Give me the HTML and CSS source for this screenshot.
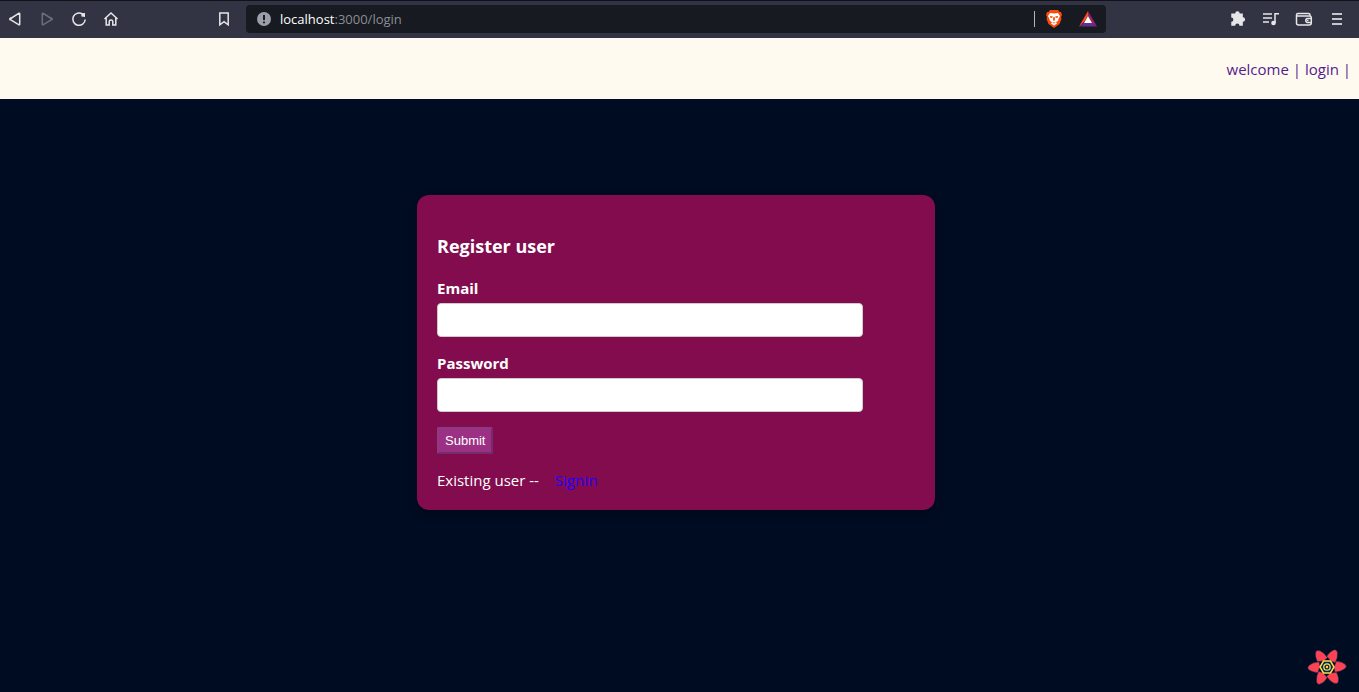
FILE: index.html
```html
<!DOCTYPE html>
<html lang="en">
<head>
<meta charset="utf-8">
<title>Login</title>
<link rel="stylesheet" href="styles.css">
</head>
<body>
<div class="toolbar">
  <div class="nav-tools">
    <button class="tool" aria-label="Back"><svg width="16" height="16" viewBox="0 0 16 16"><path d="M3 8 12 2.200Q12.700 2 12.700 2.800V13.200Q12.700 14 12 13.800L3 8.400Q2.400 8 3 7.600Z"/></svg></button>
    <button class="tool tool-dim" aria-label="Forward"><svg width="16" height="16" viewBox="0 0 16 16"><path d="M13 8 4 2.200Q3.300 2 3.300 2.800V13.200Q3.300 14 4 13.800L13 8.400Q13.600 8 13 7.600Z"/></svg></button>
    <button class="tool" aria-label="Reload"><svg width="16" height="16" viewBox="0 0 16 16"><path d="M11.500 3A6.200 6.200 0 1 0 14.200 8.500"/><path class="solid" d="M10.200 2.300 14 2V6L10.500 5.600Z"/></svg></button>
    <button class="tool" aria-label="Home"><svg width="16" height="16" viewBox="0 0 16 16"><path d="M1.500 8 8 2 14.500 8M3.200 7V14H6.200V10.500Q6.200 9 8 9T9.800 10.500V14H12.800V7"/></svg></button>
    <button class="tool tool-bookmark" aria-label="Bookmark"><svg width="16" height="16" viewBox="0 0 16 16"><path d="M3.800 2H12.200V13.800L8 10.600 3.800 13.800Z"/></svg></button>
  </div>
  <div class="address">
    <svg class="info" width="14" height="14" viewBox="0 0 14 14"><circle cx="7" cy="7" r="7" fill="#9b9ea9"/><path d="M7 3V8M7 9.500V11.300" stroke="#171a21" stroke-width="2"/></svg>
    <span class="url"><span class="host">localhost</span>:3000/login</span>
    <span class="divider"></span>
    <svg class="shield" width="18" height="20" viewBox="0 0 18 20"><path fill="#fb4b0b" d="M5 1H13L14.500 3 16 3 17 6 16 8 16.500 10 14.500 15 9 19 3.500 15 1.500 10 2 8 1 6 2 3 3.500 3Z"/><path fill="#fff" d="M5 4 9 4.500 13 4 15 7 13.500 10 13 12 11 13 12 14.500 9 16.500 6 14.500 7 13 5 12 4.500 10 3 7Z"/><path fill="#fb4b0b" d="M5 7 8 7.500 7 9 5 8.500ZM13 7 10 7.500 11 9 13 8.500ZM8.300 8H9.700L10 11 9 12 8 11ZM7 13.500H11L9 14.600Z"/></svg>
    <svg class="rewards" width="18" height="16" viewBox="0 0 18 16"><path fill="#ff4724" d="M9 0V5L5 11 0 15.500Z"/><path fill="#9e1f63" d="M9 0 18 15.500 13 12 9 5Z"/><path fill="#662d91" d="M0 15.500 5 11.500H13L18 15.500Z"/><path fill="#fff" d="M9 5 13 12H5Z"/></svg>
  </div>
  <div class="menu-tools">
    <button class="tool" aria-label="Extensions"><svg width="18" height="18" viewBox="0 0 16 16"><path class="solid" d="M5.500 3.200A2 2 0 0 1 9.500 3.200H12.300V6.500A2 2 0 0 1 12.300 10.500V14H9.300A1.900 1.900 0 0 0 5.500 14H2V10.500A1.900 1.900 0 0 0 2 6.700V3.200Z"/></svg></button>
    <button class="tool" aria-label="Media"><svg width="18" height="16" viewBox="0 0 18 16"><path d="M1 3H10M1 7H10M1 11H7M13 12V2.700H17"/><ellipse class="solid" cx="11.500" cy="12" rx="2.300" ry="2.200"/></svg></button>
    <button class="tool" aria-label="Wallet"><svg width="18" height="16" viewBox="0 0 18 16"><path d="M15 5V3.800Q15 2.500 13.500 2.500H3Q1.500 2.500 1.500 4V12Q1.500 14 3.500 14H14Q16.300 14 16.300 12V6.500Q16.300 5 14.500 5H2M16 7.500H12A2.200 2.200 0 0 0 12 11.500H16"/><path d="M11.800 9.500H13.500"/></svg></button>
    <button class="tool tool-menu" aria-label="Menu"><svg width="16" height="16" viewBox="0 0 16 16"><path d="M3 3H13M3 8H13M3 13H13"/></svg></button>
  </div>
</div>
<header class="site-header">
  <nav><a href="#welcome">welcome | </a><a href="#login">login |</a></nav>
</header>
<main class="page">
  <form class="card">
    <h3 class="title">Register user</h3>
    <label class="label" for="email">Email</label>
    <input class="field" id="email" type="email">
    <label class="label" for="password">Password</label>
    <input class="field" id="password" type="password">
    <button class="submit" type="button">Submit</button>
    <p class="existing">Existing user -- <a class="signin" href="#signin">SignIn</a></p>
  </form>
</main>
<button class="devtools" aria-label="Open query devtools">
  <svg width="40" height="40" viewBox="-20 -20 40 40">
    <defs><path id="petal" d="M-3 -6.300 -9.500 -5.200Q-12.500 -11 -11.200 -15.300Q-10.300 -17.200 -7 -16.200Q-3 -14.500 0.500 -9.500Z"/></defs>
    <g fill="#ff4154" stroke="#00344f" stroke-width="0.500">
      <use href="#petal"/><use href="#petal" transform="rotate(60)"/><use href="#petal" transform="rotate(120)"/><use href="#petal" transform="rotate(180)"/><use href="#petal" transform="rotate(240)"/><use href="#petal" transform="rotate(300)"/>
    </g>
    <path d="M-3.500 -6H3.500L7 0 3.500 6H-3.500L-7 0Z" fill="#002c4b" stroke="#ffd94c" stroke-width="1.500"/>
    <circle r="3.200" fill="none" stroke="#ffd94c" stroke-width="1.300"/><circle r="1.200" fill="#ffd94c"/>
  </svg>
</button>
</body>
</html>
```
FILE: styles.css
```css
* { box-sizing: border-box; }
body {
  margin: 0;
  min-height: 100vh;
  display: flex;
  flex-direction: column;
  background: #000c22;
  color: #fff;
  font: 15px/22px "Segoe UI", "Open Sans", "Noto Sans", sans-serif;
}
.toolbar {
  display: flex;
  align-items: center;
  height: 38px;
  padding-bottom: 1px;
  background: #323443;
  border-top: 1px solid #11111b;
}
.nav-tools {
  display: flex;
  gap: 8px;
  width: 246px;
  padding: 0 10px 0 3px;
}
.tool {
  display: grid;
  place-items: center;
  width: 24px;
  height: 24px;
  padding: 0;
  border: 0;
  background: none;
  color: #e6e6e8;
}
.tool-dim { color: #6d6e79; }
.tool-menu { color: #c4c8cc; }
.tool-bookmark { margin-left: auto; }
.tool svg {
  fill: none;
  stroke: currentColor;
  stroke-width: 1.5;
}
.tool-menu svg { stroke-width: 2; }
.tool .solid { fill: currentColor; stroke: none; }
.address {
  flex: 1;
  display: flex;
  align-items: center;
  height: 28px;
  padding: 0 9px 0 11px;
  border-radius: 4px;
  background: #171a21;
}
.url {
  flex: 1;
  margin-left: 9px;
  color: #8c8e93;
  font-size: 13px;
}
.host { color: #fff; }
.divider { width: 1px; height: 16px; background: #b5b6ba; }
.shield { margin-left: 10px; }
.rewards { margin-left: 16px; }
.menu-tools {
  display: flex;
  justify-content: flex-end;
  gap: 9px;
  width: 253px;
  padding-right: 10px;
}
.site-header {
  display: flex;
  align-items: center;
  justify-content: flex-end;
  height: 61px;
  padding-right: 8px;
  background: #fffaf0;
}
.site-header a {
  color: #551a8b;
  text-decoration: none;
  white-space: pre;
}
.page {
  flex: 1;
  padding: 96px 7px 0 0;
}
.card {
  width: 518px;
  max-width: 100%;
  margin: 0 auto;
  padding: 40px 20px 19px;
  border-radius: 12px;
  background: #820c4d;
  box-shadow: 0 4px 8px rgba(0, 0, 0, 0.3);
}
.title {
  margin: 0 0 20px;
  font-size: 18px;
  line-height: 22px;
}
.label {
  display: block;
  font-weight: 700;
}
.field {
  display: block;
  width: 426px;
  max-width: 100%;
  height: 34px;
  margin: 4px 0 15px;
  padding: 6px 8px;
  border: 1px solid #ccc;
  border-radius: 4px;
  background: #fff;
}
.submit {
  display: block;
  height: 27px;
  padding: 0 6px;
  border: 2px solid;
  border-color: #8d3b80 #742d69 #742d69 #8d3b80;
  border-radius: 2px;
  background: #9b3084;
  color: #fff;
  font: 13px "Liberation Sans", Arial, sans-serif;
}
.existing { margin: 15px 0 0; }
.signin {
  margin-left: 12px;
  color: #2400ff;
  text-decoration: none;
}
.devtools {
  position: fixed;
  right: 12px;
  bottom: 5px;
  padding: 0;
  border: 0;
  background: none;
}
.devtools svg { display: block; }
```
